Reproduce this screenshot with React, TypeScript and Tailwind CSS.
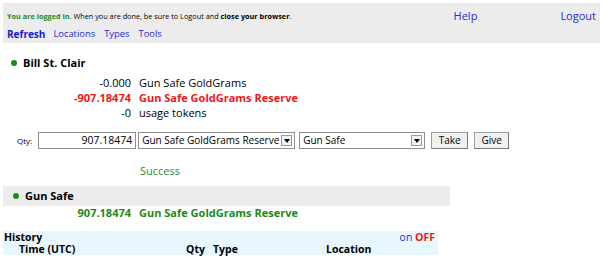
import React from 'react';

const font = { fontFamily: '"Open Sans", "DejaVu Sans", sans-serif' };

function Select({ value, width }: { value: string; width: string }) {
  return (
    <div className={`flex items-center justify-between border border-[#8e8e8e] bg-white h-[17px] pl-[3px] pr-[2px] ${width}`}>
      <span className="text-[10px] leading-[15px] text-black whitespace-nowrap">{value}</span>
      <span className="flex items-center justify-center w-[11px] h-[11px] border border-[#9a9a9a] bg-[#f2f2f2]">
        <span className="block w-0 h-0 border-l-[3px] border-r-[3px] border-t-[4px] border-l-transparent border-r-transparent border-t-black" />
      </span>
    </div>
  );
}

export default function App() {
  return (
    <div className="w-[605px] h-[275px] bg-white overflow-hidden pt-[3px] px-[3px]" style={font}>
      {/* header */}
      <div className="bg-[#ececec] w-[597px] h-[40px] px-[4px] pt-[7px]">
        <div className="flex items-center h-[12px]">
          <div className="text-[7.3px] leading-[12px] text-black whitespace-nowrap">
            <span className="text-[#1f8a1f] font-bold">You are logged in.</span> When you are done, be sure to Logout and{' '}
            <span className="font-bold">close your browser</span>.
          </div>
          <a className="ml-auto mr-[83px] text-[11px] leading-[12px] text-[#2b2bd1]">Help</a>
          <a className="text-[11px] leading-[12px] text-[#2b2bd1]">Logout</a>
        </div>
        <div className="flex items-end mt-[5px] text-[9.4px] leading-[14px] text-[#2b2bd1]">
          <a className="font-bold text-[10px] text-[#1a1ad0] mr-[8px]">Refresh</a>
          <a className="mr-[9px]">Locations</a>
          <a className="mr-[9px]">Types</a>
          <a>Tools</a>
        </div>
      </div>

      {/* account */}
      <div className="flex items-center gap-[6px] pl-[8px] mt-[13px] h-[14px]">
        <span className="w-[6px] h-[6px] rounded-full bg-[#1a8a1a]" />
        <span className="text-[11px] leading-[14px] font-bold text-black">Bill St. Clair</span>
      </div>
      <div className="mt-[5px] text-[11px] leading-[15px]">
        <div className="flex">
          <span className="w-[128px] text-right text-black">-0.000</span>
          <span className="ml-[8px] text-black">Gun Safe GoldGrams</span>
        </div>
        <div className="flex font-bold text-[#f0161b]">
          <span className="w-[128px] text-right">-907.18474</span>
          <span className="ml-[8px]">Gun Safe GoldGrams Reserve</span>
        </div>
        <div className="flex">
          <span className="w-[128px] text-right text-black">-0</span>
          <span className="ml-[8px] text-black">usage tokens</span>
        </div>
      </div>

      {/* transfer form */}
      <div className="flex items-center mt-[11px] h-[19px]">
        <span className="ml-[14px] text-[8px] text-black">Qty:</span>
        <div className="ml-[6px] w-[98px] h-[17px] border border-[#8e8e8e] bg-white text-[10.5px] text-right pr-[3px] leading-[15px]">
          907.18474
        </div>
        <div className="ml-[2px]">
          <Select value="Gun Safe GoldGrams Reserve" width="w-[157px]" />
        </div>
        <div className="ml-[4px]">
          <Select value="Gun Safe" width="w-[126px]" />
        </div>
        <button className="ml-[6px] h-[17px] w-[37px] border border-[#a0a0a0] border-b-[#777] border-r-[#777] bg-[#f0f0f0] text-[10px] leading-[15px] text-black">Take</button>
        <button className="ml-[6px] h-[17px] w-[35px] border border-[#a0a0a0] border-b-[#777] border-r-[#777] bg-[#f0f0f0] text-[10px] leading-[15px] text-black">Give</button>
      </div>

      <div className="mt-[14px] pl-[137px] text-[11px] leading-[14px] text-[#2a8a2a] h-[14px]">Success</div>

      {/* location */}
      <div className="mt-[8px] w-[447px] h-[20px] bg-[#ececec] flex items-center gap-[6px] pl-[10px]">
        <span className="w-[6px] h-[6px] rounded-full bg-[#1a8a1a]" />
        <span className="text-[11px] leading-[14px] font-bold text-black">Gun Safe</span>
      </div>
      <div className="flex text-[11px] font-bold text-[#1a8a1a] leading-[13px]">
        <span className="w-[128px] text-right">907.18474</span>
        <span className="ml-[8px]">Gun Safe GoldGrams Reserve</span>
      </div>

      {/* history */}
      <div className="mt-[12px] w-[435px] h-[24px] bg-[#e8f6fd] text-[10.5px] font-bold text-black leading-[12px]">
        <div className="flex h-[12px]">
          <span className="pl-[1px]">History</span>
          <span className="ml-auto pr-[3px]">
            <span className="font-normal text-[#2b2bd1]">on</span> <span className="text-[#f0161b]">OFF</span>
          </span>
        </div>
        <div className="flex h-[12px]">
          <span className="pl-[16px] w-[176px]">Time (UTC)</span>
          <span className="w-[26px] text-right">Qty</span>
          <span className="ml-[8px] w-[113px]">Type</span>
          <span>Location</span>
        </div>
      </div>
    </div>
  );
}
